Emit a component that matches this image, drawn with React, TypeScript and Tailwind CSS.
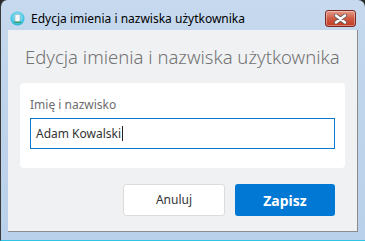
import React from "react";

function AppIcon() {
  return (
    <svg width="15" height="15" viewBox="0 0 15 15">
      <defs>
        <radialGradient id="ic" cx="50%" cy="40%" r="60%">
          <stop offset="0%" stopColor="#bdf3ff" />
          <stop offset="100%" stopColor="#1fb6d6" />
        </radialGradient>
      </defs>
      <circle cx="7.5" cy="7.5" r="7" fill="url(#ic)" />
      <rect x="5" y="3.5" width="5" height="7.5" rx="0.5" fill="#f4f8fb" stroke="#8fa9c4" strokeWidth="0.6" />
      <rect x="4" y="10.5" width="7" height="1.5" fill="#3a9f6a" />
    </svg>
  );
}

function CloseButton() {
  return (
    <div className="w-[31px] h-[17px] rounded-[3px] border border-[#7a2a22] bg-gradient-to-b from-[#e39a88] via-[#cf5a43] to-[#c23a22] flex items-center justify-center shadow-[inset_0_0_0_1px_rgba(255,255,255,0.35)]">
      <svg width="13" height="10" viewBox="0 0 13 10">
        <path d="M2 1.5 L11 8.5 M11 1.5 L2 8.5" stroke="#5a5a5a" strokeWidth="4" strokeLinecap="round" />
        <path d="M2 1.5 L11 8.5 M11 1.5 L2 8.5" stroke="#ffffff" strokeWidth="2.4" strokeLinecap="round" />
      </svg>
    </div>
  );
}

export default function App() {
  return (
    <div className="w-[365px] h-[241px] bg-[#2a2a2a] overflow-hidden font-['Noto_Sans','Liberation_Sans',sans-serif]">
      <div className="w-full h-full flex flex-col rounded-t-[7px] border-l border-[#3a3a3a] border-b border-b-[#2fc3e4] bg-gradient-to-b from-[#c6d9ee] via-[#bed4eb] to-[#b9d1ea]">
        <div className="h-[30px] shrink-0 flex items-center pt-[7px] pl-[9px] pr-[9px]">
          <AppIcon />
          <span className="ml-[6px] text-[12px] text-black leading-none">
            Edycja imienia i nazwiska użytkownika
          </span>
          <div className="ml-auto">
            <CloseButton />
          </div>
        </div>
        <div className="mx-[7px] mb-[8px] flex-1 flex flex-col bg-[#f0f1f3] border-r border-b border-[#8c8c8c]">
          <h1 className="pt-[13px] pl-[17px] text-[18.5px] font-light text-[#737373] leading-[27px] whitespace-nowrap">
            Edycja imienia i nazwiska użytkownika
          </h1>
          <div className="mt-[13px] mx-[12px] bg-white rounded-[4px] px-[10px] pt-[14px] pb-[19px] flex flex-col">
            <label className="text-[12px] text-[#6d6d6d] leading-[16px]">Imię i nazwisko</label>
            <div className="mt-[5px] h-[31px] border border-[#0a78cf] flex items-center px-[5px] text-[12px] text-[#333333]">
              Adam Kowalski
              <span className="ml-[1px] w-px h-[15px] bg-[#222]" />
            </div>
          </div>
          <div className="mt-[16px] mr-[22px] flex justify-end gap-[10px]">
            <button className="w-[102px] h-[32px] bg-white border border-[#dcdcdc] rounded-[3px] text-[12px] text-[#333]">
              Anuluj
            </button>
            <button className="w-[100px] h-[32px] bg-[#0078d4] rounded-[3px] text-[14px] font-bold text-white">
              Zapisz
            </button>
          </div>
        </div>
      </div>
    </div>
  );
}
